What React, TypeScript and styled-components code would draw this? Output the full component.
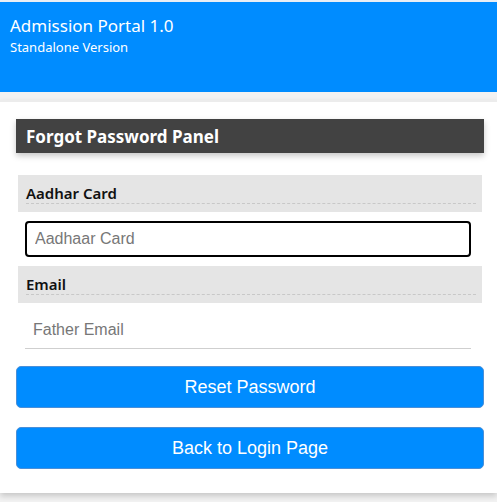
import styled, { createGlobalStyle } from 'styled-components';

const GlobalStyle = createGlobalStyle`
  html, body {
    margin: 0;
    padding: 0;
    background: #f2f2f2;
  }
  body {
    font-family: 'Noto Sans', 'Open Sans', sans-serif;
  }
`;

export default function App() {
  return (
    <>
      <GlobalStyle />
      <Page>
        <Header>
          <Title>Admission Portal 1.0</Title>
          <Subtitle>Standalone Version</Subtitle>
        </Header>
        <Card>
          <PanelTitle>Forgot Password Panel</PanelTitle>
          <Form>
            <FieldLabel>
              <span>Aadhar Card</span>
            </FieldLabel>
            <Input variant="boxed" placeholder="Aadhaar Card" />
            <FieldLabel>
              <span>Email</span>
            </FieldLabel>
            <Input variant="line" placeholder="Father Email" />
          </Form>
          <Actions>
            <Button>Reset Password</Button>
            <Button>Back to Login Page</Button>
          </Actions>
        </Card>
      </Page>
    </>
  );
}

const Page = styled.div`
  display: flex;
  flex-direction: column;
  min-height: 502px;
  border-top: 2px solid #e8eef5;
  box-sizing: border-box;
`;

const Header = styled.header`
  background: #008cff;
  color: #fff;
  height: 90px;
  padding: 13px 10px 0;
  box-sizing: border-box;
`;

const Title = styled.div`
  font-size: 17px;
  line-height: 22px;
`;

const Subtitle = styled.div`
  font-size: 13px;
  line-height: 21px;
`;

const Card = styled.section`
  margin-top: 8px;
  background: #fff;
  border-top: 2px solid #ececec;
  padding: 17px 13px 24px 16px;
  box-shadow: 0 3px 6px rgba(0, 0, 0, 0.18);
`;

const PanelTitle = styled.h2`
  margin: 0;
  background: #424242;
  color: #fff;
  font-size: 17px;
  font-weight: 700;
  height: 34px;
  line-height: 35px;
  padding: 0 10px;
  box-shadow: 0 3px 6px rgba(0, 0, 0, 0.22);
`;

const Form = styled.div`
  display: flex;
  flex-direction: column;
  margin: 22px 2px 0;
`;

const FieldLabel = styled.label`
  display: block;
  background: #e5e5e5;
  height: 37px;
  padding: 0 6px 0 8px;
  box-sizing: border-box;

  span {
    display: block;
    font-size: 15px;
    font-weight: 600;
    color: #111;
    line-height: 20px;
    padding-top: 8px;
    border-bottom: 1px dashed #c8c8c8;
  }
`;

const Input = styled.input<{ variant: 'boxed' | 'line' }>`
  font-family: 'Liberation Sans', Arial, sans-serif;
  font-size: 16px;
  color: #222;
  margin: 9px 11px 9px 7px;
  padding: 0 8px;
  box-sizing: border-box;
  outline: none;
  background: #fff;
  border: ${(p) => (p.variant === 'boxed' ? '2px solid #000' : 'none')};
  border-bottom: ${(p) => (p.variant === 'boxed' ? '2px solid #000' : '1px solid #cfcfcf')};
  border-radius: ${(p) => (p.variant === 'boxed' ? '4px' : '0')};
  margin-top: ${(p) => (p.variant === 'boxed' ? '9px' : '8px')};
  margin-bottom: ${(p) => (p.variant === 'boxed' ? '9px' : '0')};
  height: ${(p) => (p.variant === 'boxed' ? '36px' : '38px')};

  &::placeholder {
    color: #777;
  }
`;

const Actions = styled.div`
  display: flex;
  flex-direction: column;
  gap: 19px;
  margin-top: 17px;
`;

const Button = styled.button`
  height: 42px;
  background: #008cff;
  color: #fff;
  border: 1px solid #4a8fd8;
  border-radius: 5px;
  font-family: 'Liberation Sans', Arial, sans-serif;
  font-size: 18px;
  cursor: pointer;
`;
